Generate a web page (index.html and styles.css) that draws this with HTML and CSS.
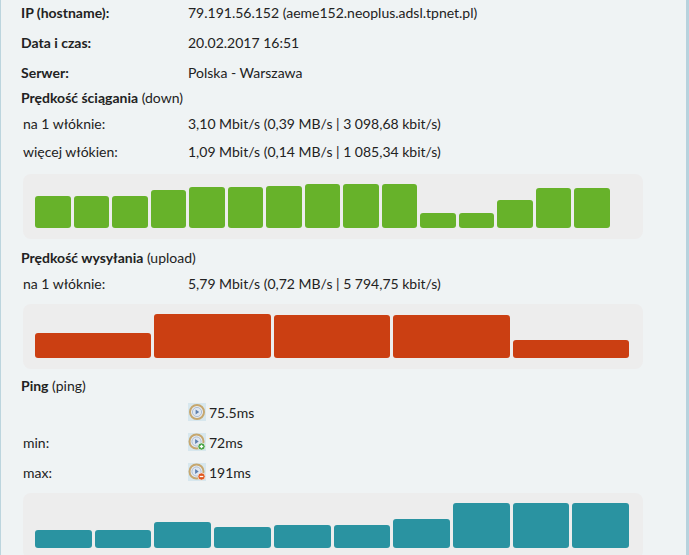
FILE: index.html
```html
<!DOCTYPE html>
<html lang="pl">
<head>
<meta charset="utf-8">
<title>Wynik testu</title>
<link rel="stylesheet" href="styles.css">
</head>
<body>
<div class="panel">
  <div class="info">
    <div class="row"><span class="lbl strong">IP (hostname):</span><span>79.191.56.152 (aeme152.neoplus.adsl.tpnet.pl)</span></div>
    <div class="row"><span class="lbl strong">Data i czas:</span><span>20.02.2017 16:51</span></div>
    <div class="row"><span class="lbl strong">Serwer:</span><span>Polska - Warszawa</span></div>
  </div>

  <div class="heading"><b>Prędkość ściągania</b> (down)</div>
  <div class="row sub"><span class="lbl">na 1 włóknie:</span><span>3,10 Mbit/s (0,39 MB/s | 3 098,68 kbit/s)</span></div>
  <div class="row sub"><span class="lbl">więcej włókien:</span><span>1,09 Mbit/s (0,14 MB/s | 1 085,34 kbit/s)</span></div>
  <div class="chart chart-down">
    <div class="bars bars-narrow">
      <div class="bar green" style="height:32px"></div>
      <div class="bar green" style="height:32px"></div>
      <div class="bar green" style="height:32px"></div>
      <div class="bar green" style="height:38px"></div>
      <div class="bar green" style="height:41px"></div>
      <div class="bar green" style="height:41px"></div>
      <div class="bar green" style="height:42px"></div>
      <div class="bar green" style="height:44px"></div>
      <div class="bar green" style="height:44px"></div>
      <div class="bar green" style="height:44px"></div>
      <div class="bar green" style="height:15px"></div>
      <div class="bar green" style="height:15px"></div>
      <div class="bar green" style="height:28px"></div>
      <div class="bar green" style="height:40px"></div>
      <div class="bar green" style="height:40px"></div>
    </div>
  </div>

  <div class="heading heading-up"><b>Prędkość wysyłania</b> (upload)</div>
  <div class="row sub"><span class="lbl">na 1 włóknie:</span><span>5,79 Mbit/s (0,72 MB/s | 5 794,75 kbit/s)</span></div>
  <div class="chart chart-up">
    <div class="bars">
      <div class="bar red" style="height:25px"></div>
      <div class="bar red" style="height:44px"></div>
      <div class="bar red" style="height:43px"></div>
      <div class="bar red" style="height:43px"></div>
      <div class="bar red" style="height:18px"></div>
    </div>
  </div>

  <div class="heading heading-ping"><b>Ping</b> (ping)</div>
  <div class="row sub ping"><span class="lbl"></span><span class="val">
    <svg class="ico" viewBox="0 0 18 18" width="18" height="18"><rect width="18" height="18" fill="#d7e7ee"/><circle cx="9" cy="9" r="7" fill="#e9eef5" stroke="#c6a76e" stroke-width="2"/><circle cx="9" cy="9" r="4.6" fill="#dfe7f1" stroke="#9fb3c9" stroke-width="0.8"/><path d="M7.6 6.6 L11.2 9 L7.6 11.4 Z" fill="#5f80ad"/></svg>75.5ms</span></div>
  <div class="row sub ping"><span class="lbl">min:</span><span class="val">
    <svg class="ico" viewBox="0 0 18 18" width="18" height="18"><rect width="18" height="18" fill="#d7e7ee"/><circle cx="8.5" cy="8.5" r="7" fill="#e9eef5" stroke="#c6a76e" stroke-width="2"/><circle cx="8.5" cy="8.5" r="4.6" fill="#dfe7f1" stroke="#9fb3c9" stroke-width="0.8"/><path d="M7.1 6.1 L10.7 8.5 L7.1 10.9 Z" fill="#5f80ad"/><circle cx="13.5" cy="13.5" r="3.6" fill="#3e9e3a" stroke="#e9f2ea" stroke-width="0.8"/><path d="M11.7 13.5 H15.3 M13.5 11.7 V15.3" stroke="#fff" stroke-width="1.3"/></svg>72ms</span></div>
  <div class="row sub ping"><span class="lbl">max:</span><span class="val">
    <svg class="ico" viewBox="0 0 18 18" width="18" height="18"><rect width="18" height="18" fill="#d7e7ee"/><circle cx="8.5" cy="8.5" r="7" fill="#e9eef5" stroke="#c6a76e" stroke-width="2"/><circle cx="8.5" cy="8.5" r="4.6" fill="#dfe7f1" stroke="#9fb3c9" stroke-width="0.8"/><path d="M7.1 6.1 L10.7 8.5 L7.1 10.9 Z" fill="#5f80ad"/><circle cx="13.5" cy="13.5" r="3.6" fill="#e0561c" stroke="#f5e6dd" stroke-width="0.8"/><path d="M11.7 13.5 H15.3" stroke="#fff" stroke-width="1.3"/></svg>191ms</span></div>
  <div class="chart chart-ping">
    <div class="bars">
      <div class="bar teal" style="height:18px"></div>
      <div class="bar teal" style="height:18px"></div>
      <div class="bar teal" style="height:26px"></div>
      <div class="bar teal" style="height:21px"></div>
      <div class="bar teal" style="height:23px"></div>
      <div class="bar teal" style="height:23px"></div>
      <div class="bar teal" style="height:29px"></div>
      <div class="bar teal" style="height:45px"></div>
      <div class="bar teal" style="height:45px"></div>
      <div class="bar teal" style="height:45px"></div>
    </div>
  </div>
</div>
</body>
</html>
```

FILE: styles.css
```css
html, body {
  margin: 0;
  padding: 0;
  background: #ffffff;
}

body {
  font-family: Lato, "Open Sans", sans-serif;
  font-size: 14px;
  color: #222222;
}

.panel {
  box-sizing: border-box;
  width: 689px;
  height: 555px;
  overflow: hidden;
  background: #eff3f4;
  border-left: 1px solid #bcd5de;
  border-right: 3px solid #b7d2dd;
  padding-left: 20px;
}

.info {
  margin-top: -3px;
}

.row {
  display: grid;
  grid-template-columns: 167px 1fr;
  height: 30px;
  align-items: center;
  white-space: nowrap;
}

.strong {
  font-weight: bold;
}

.row.sub {
  height: 28px;
}

.row.sub .lbl {
  padding-left: 2px;
}

.row.ping {
  height: 30px;
}

.val {
  display: flex;
  align-items: center;
  gap: 3px;
}

.ico {
  display: block;
  flex: none;
}

.heading {
  height: 22px;
  line-height: 22px;
  white-space: nowrap;
}

.heading b {
  font-weight: bold;
}

.heading-up {
  margin-top: 8px;
}

.heading-ping {
  margin-top: 6px;
}

.chart {
  width: 620px;
  margin-left: 2px;
  box-sizing: border-box;
  background: #ededed;
  border-radius: 8px;
  padding: 10px 12px 11px;
}

.chart-down {
  margin-top: 9px;
}

.chart-up {
  margin-top: 7px;
}

.chart-ping {
  margin-top: 6px;
}

.bars {
  display: flex;
  align-items: flex-end;
  gap: 3px;
  width: 594px;
}

.bars-narrow {
  width: 575px;
}

.bar {
  flex: 1 1 0;
  border-radius: 3px;
}

.green {
  background: #67b22a;
}

.red {
  background: #cb3f12;
}

.teal {
  background: #2a93a1;
}
```
